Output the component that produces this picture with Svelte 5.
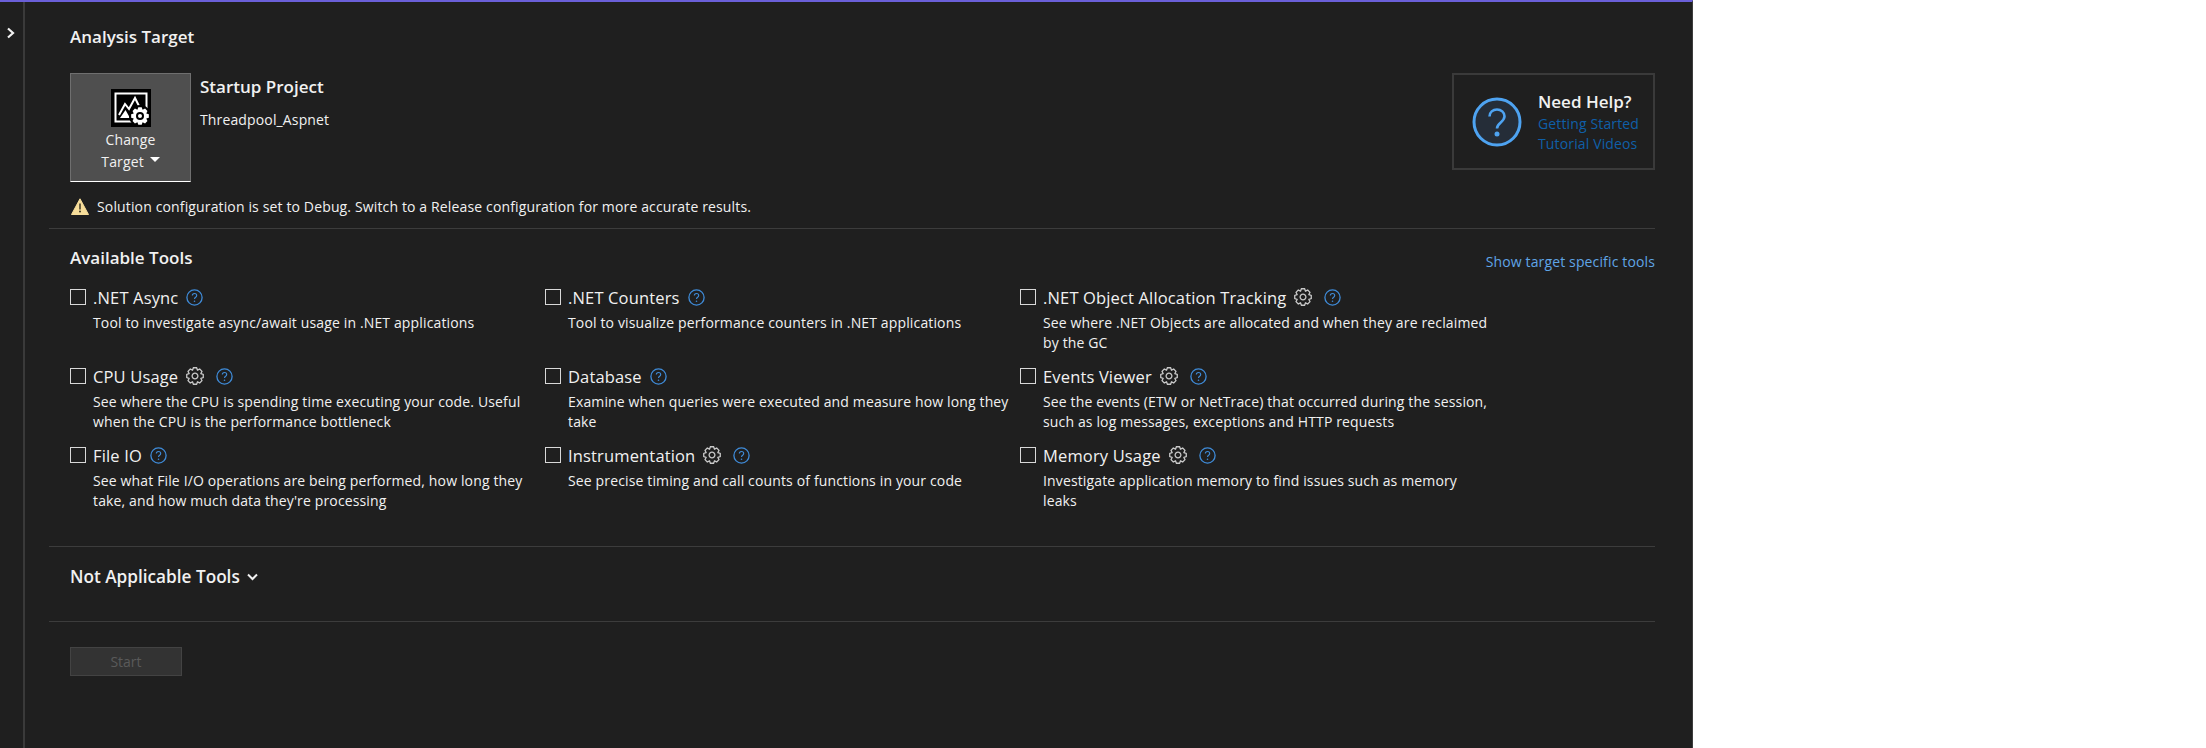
<script>
  const tools = [
    { name: '.NET Async', desc: 'Tool to investigate async/await usage in .NET applications' },
    { name: '.NET Counters', desc: 'Tool to visualize performance counters in .NET applications' },
    { name: '.NET Object Allocation Tracking', gear: true, desc: 'See where .NET Objects are allocated and when they are reclaimed by the GC' },
    { name: 'CPU Usage', gear: true, desc: 'See where the CPU is spending time executing your code. Useful when the CPU is the performance bottleneck' },
    { name: 'Database', desc: 'Examine when queries were executed and measure how long they take' },
    { name: 'Events Viewer', gear: true, desc: 'See the events (ETW or NetTrace) that occurred during the session, such as log messages, exceptions and HTTP requests' },
    { name: 'File IO', desc: "See what File I/O operations are being performed, how long they take, and how much data they're processing" },
    { name: 'Instrumentation', gear: true, desc: 'See precise timing and call counts of functions in your code' },
    { name: 'Memory Usage', gear: true, desc: 'Investigate application memory to find issues such as memory leaks' }
  ];

  // outline of a gear with n teeth, centred on 0,0
  function gearPath(teeth, outer, inner) {
    const step = (Math.PI * 2) / teeth;
    let d = '';
    for (let i = 0; i < teeth; i++) {
      const a = i * step;
      const pts = [
        [inner, a - step * 0.5],
        [outer, a - step * 0.24],
        [outer, a + step * 0.24]
      ];
      for (const [r, t] of pts) {
        d += (d ? 'L' : 'M') + (r * Math.cos(t)).toFixed(2) + ' ' + (r * Math.sin(t)).toFixed(2);
      }
    }
    return d + 'Z';
  }
  const gear = gearPath(8, 8.4, 6.4);
</script>

{#snippet help()}
  <svg class="qmark" width="17" height="17" viewBox="0 0 17 17" fill="none" stroke="#3f8bd8">
    <circle cx="8.5" cy="8.5" r="7.6" stroke-width="1.3" />
    <path d="M6.3 6.6c0-1.3 1-2.1 2.2-2.1s2.2.8 2.2 2c0 1.8-2.2 1.8-2.2 3.6" stroke-width="1.1" />
    <circle cx="8.5" cy="12.2" r=".8" fill="#3f8bd8" stroke="none" />
  </svg>
{/snippet}

{#snippet gearIcon()}
  <svg class="gear" width="18" height="18" viewBox="-9 -9 18 18" fill="none" stroke="#c8c8c8" stroke-width="1.3">
    <path d={gear} />
    <circle r="2.9" />
  </svg>
{/snippet}

<div class="panel">
  <aside class="rail">
    <svg width="10" height="12" viewBox="0 0 10 12" fill="none" stroke="#f1f1f1" stroke-width="2.2">
      <path d="M2 1.5 7 6l-5 4.5" />
    </svg>
  </aside>

  <main class="content">
    <h2 class="title">Analysis Target</h2>

    <section class="target">
      <button class="change">
        <svg width="40" height="38" viewBox="0 0 40 38">
          <rect width="40" height="38" fill="#000" />
          <rect x="4.5" y="4.5" width="31" height="28" fill="none" stroke="#fff" stroke-width="2" />
          <path d="M8 26 14 15l4 5 6-11 6 12" fill="none" stroke="#fff" stroke-width="2" />
          <path d="M9 29 14.5 21 19 29Z" fill="#fff" />
          <circle cx="29" cy="27" r="11" fill="#000" />
          <g transform="translate(29 27)">
            <path d={gearPath(8, 9, 6.8)} fill="#fff" />
            <circle r="4" fill="#000" />
            <circle r="2" fill="#fff" />
          </g>
        </svg>
        <span class="change-label">Change</span>
        <span class="change-label">Target <i class="caret"></i></span>
      </button>
      <div class="project">
        <div class="project-title">Startup Project</div>
        <div class="project-name">Threadpool_Aspnet</div>
      </div>
      <div class="needhelp">
        <svg width="50" height="50" viewBox="0 0 50 50" fill="none">
          <circle cx="25" cy="25" r="23" fill="#252d38" stroke="#4ea3f1" stroke-width="3" />
          <path d="M17.5 19.5c0-4.3 3.400-7 7.500-7s7.500 2.700 7.500 6.800c0 6-7.500 6.200-7.500 12.200" stroke="#4ea3f1" stroke-width="2.600" />
          <circle cx="25" cy="37" r="2.500" fill="#4ea3f1" />
        </svg>
        <div class="help-text">
          <div class="help-title">Need Help?</div>
          <a class="help-link" href="#start">Getting Started</a>
          <a class="help-link" href="#videos">Tutorial Videos</a>
        </div>
      </div>
    </section>

    <div class="warning">
      <svg width="18" height="17" viewBox="0 0 18 17">
        <path d="M9 .8 17.500 16.500H.5Z" fill="#f6dd9a" stroke="#f6dd9a" stroke-linejoin="round" />
        <path d="M9 5.500v6" stroke="#3a3320" stroke-width="1.500" />
        <circle cx="9" cy="13.600" r="1" fill="#3a3320" />
      </svg>
      <span>Solution configuration is set to Debug. Switch to a Release configuration for more accurate results.</span>
    </div>

    <section class="tools">
      <div class="tools-head">
        <h2 class="title">Available Tools</h2>
        <a class="show" href="#show">Show target specific tools</a>
      </div>
      <div class="grid">
        {#each tools as tool}
          <div class="tool">
            <span class="box"></span>
            <div class="tool-body">
              <div class="tool-name">
                <span>{tool.name}</span>
                {#if tool.gear}{@render gearIcon()}{/if}
                {@render help()}
              </div>
              <p class="tool-desc">{tool.desc}</p>
            </div>
          </div>
        {/each}
      </div>
    </section>

    <section class="na">
      <h2 class="title">Not Applicable Tools</h2>
      <svg width="11" height="8" viewBox="0 0 11 8" fill="none" stroke="#f1f1f1" stroke-width="2">
        <path d="M1 1.500 5.500 6 10 1.500" />
      </svg>
    </section>

    <section class="actions">
      <button class="start" disabled>Start</button>
    </section>
  </main>
</div>

<style>
  :global(body) {
    background: #fff;
  }

  .panel {
    display: flex;
    width: 1693px;
    height: 748px;
    box-sizing: border-box;
    background: #1f1f1f;
    border-top: 2px solid #6a5fd8;
    border-right: 1px solid #3c3c3c;
    color: #f1f1f1;
    font-family: "Open Sans", "Noto Sans", sans-serif;
    font-size: 14px;
    letter-spacing: 0.14px;
  }

  .rail {
    width: 23px;
    border-right: 2px solid #3a3a3a;
    flex: none;
    box-sizing: content-box;
    display: flex;
    justify-content: center;
    padding-top: 25px;
    height: calc(100% - 25px);
  }

  .rail svg {
    margin-right: 1px;
  }

  .content {
    width: 1606px;
    margin-left: 24px;
    display: flex;
    flex-direction: column;
  }

  .title {
    margin: 0;
    font-size: 17px;
    font-weight: 600;
    line-height: 22px;
    letter-spacing: 0;
  }

  .content > .title {
    margin: 24px 0 0 21px;
  }

  .target {
    display: flex;
    margin: 25px 0 0 21px;
    align-items: flex-start;
  }

  .change {
    width: 121px;
    height: 109px;
    box-sizing: border-box;
    padding: 15px 0 0;
    background: #4f4f4f;
    border: 1px solid #6f6f6f;
    border-bottom-color: #fff;
    color: #f1f1f1;
    font: inherit;
    letter-spacing: inherit;
    display: flex;
    flex-direction: column;
    align-items: center;
  }

  .change-label {
    line-height: 22px;
    position: relative;
    top: 1px;
  }

  .change-label:first-of-type {
    margin-top: 1px;
  }

  .caret {
    display: inline-block;
    width: 0;
    height: 0;
    margin: 0 0 7px 2px;
    border: 5px solid transparent;
    border-top: 5px solid #fff;
    border-bottom: 0;
    vertical-align: middle;
  }

  .project {
    margin-left: 9px;
  }

  .project-title {
    font-size: 17px;
    font-weight: 600;
    line-height: 22px;
    letter-spacing: 0;
    margin-top: 3px;
  }

  .project-name {
    margin-top: 12px;
    line-height: 20px;
  }

  .needhelp {
    margin-left: auto;
    width: 203px;
    height: 97px;
    box-sizing: border-box;
    border: 2px solid #3a3a3a;
    display: flex;
    align-items: center;
    padding-left: 18px;
    gap: 16px;
  }

  .help-text {
    display: flex;
    flex-direction: column;
  }

  .help-title {
    font-size: 17px;
    font-weight: 600;
    line-height: 22px;
    letter-spacing: 0;
  }

  .help-link {
    color: #0f5fa8;
    text-decoration: none;
    line-height: 20px;
    position: relative;
    top: 1px;
  }

  .warning {
    display: flex;
    align-items: center;
    gap: 8px;
    margin: 14px 0 0 22px;
    height: 20px;
  }

  .tools {
    margin-top: 12px;
    border-top: 1px solid #3c3c3c;
    height: 317px;
    border-bottom: 1px solid #3c3c3c;
  }

  .tools-head {
    display: flex;
    justify-content: space-between;
    padding: 18px 0 0 21px;
    height: 42px;
    box-sizing: content-box;
  }

  .show {
    color: #5fa5e6;
    text-decoration: none;
    margin-top: 5px;
    line-height: 20px;
  }

  .grid {
    display: grid;
    grid-template-columns: repeat(3, 475px);
    grid-auto-rows: 79px;
    padding-left: 21px;
  }

  .tool {
    display: flex;
    gap: 7px;
  }

  .box {
    width: 16px;
    height: 16px;
    box-sizing: border-box;
    border: 1px solid #d8d8d8;
    flex: none;
  }

  .tool-body {
    width: 448px;
    margin-top: -5px;
  }

  .tool-name {
    display: flex;
    align-items: center;
    gap: 8px;
    font-size: 16.5px;
    letter-spacing: 0.15px;
    height: 26px;
  }

  .gear {
    margin-right: 4px;
  }

  .tool-desc {
    margin: 3px 0 0;
    line-height: 20px;
  }

  .na {
    display: flex;
    align-items: center;
    gap: 7px;
    height: 60px;
    padding: 0 0 14px 21px;
    border-bottom: 1px solid #3c3c3c;
  }

  .na .title {
    font-size: 17.2px;
  }

  .actions {
    padding: 25px 0 0 21px;
  }

  .start {
    width: 112px;
    height: 29px;
    background: #333;
    border: 1px solid #434343;
    color: #5a5a5a;
    font: inherit;
    padding: 0;
  }
</style>
